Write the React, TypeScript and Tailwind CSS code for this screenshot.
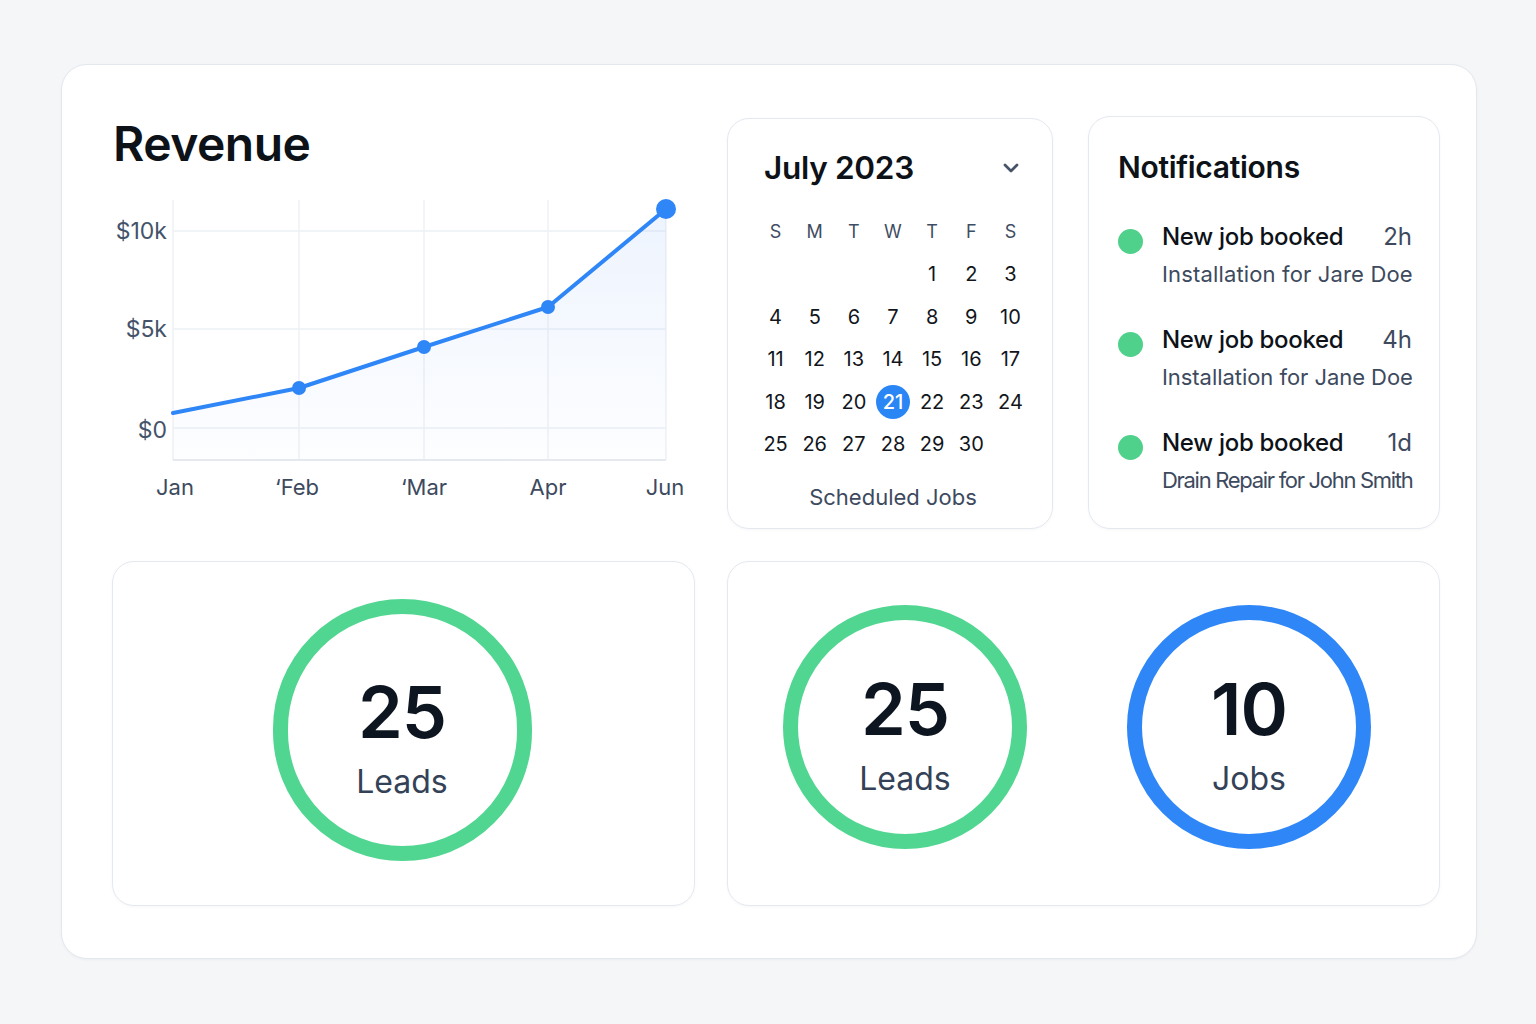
import { ChevronDown } from 'lucide-react';

const weekdays = ['S', 'M', 'T', 'W', 'T', 'F', 'S'];

// July as drawn in the design: 1 falls on the Thursday column
const dates: (number | null)[] = [
  null, null, null, null, 1, 2, 3,
  4, 5, 6, 7, 8, 9, 10,
  11, 12, 13, 14, 15, 16, 17,
  18, 19, 20, 21, 22, 23, 24,
  25, 26, 27, 28, 29, 30, null,
];

const notifications = [
  { title: 'New job booked', time: '2h', detail: 'Installation for Jare Doe', track: 'tracking-[0.15px]' },
  { title: 'New job booked', time: '4h', detail: 'Installation for Jane Doe', track: 'tracking-[-0.05px]' },
  { title: 'New job booked', time: '1d', detail: 'Drain Repair for John Smith', track: 'tracking-[-1.3px]' },
];

const points = [
  [61, 241],
  [187, 216],
  [312, 175],
  [436, 135],
  [554, 37],
];

const RevenueChart = () => {
  const line = points.map((p) => p.join(',')).join(' ');
  const area = `M61,288 L${points.map((p) => p.join(',')).join(' L')} L554,288 Z`;
  const xLabels = [
    { x: 63, t: 'Jan' },
    { x: 185, t: '\u2018Feb' },
    { x: 312, t: '\u2018Mar' },
    { x: 436, t: 'Apr' },
    { x: 553, t: 'Jun' },
  ];
  return (
    <svg width="583" height="340" viewBox="0 0 583 340" className="block">
      <defs>
        <linearGradient id="rev" x1="0" y1="0" x2="0" y2="1">
          <stop offset="0%" stopColor="#3b82f6" stopOpacity="0.09" />
          <stop offset="100%" stopColor="#3b82f6" stopOpacity="0.01" />
        </linearGradient>
      </defs>
      {[59, 157, 256].map((y) => (
        <line key={y} x1="61" x2="554" y1={y} y2={y} stroke="#edf0f4" strokeWidth="1.5" />
      ))}
      {[61, 187, 312, 436, 554].map((x) => (
        <line key={x} x1={x} x2={x} y1="28" y2="288" stroke="#eff1f5" strokeWidth="1.5" />
      ))}
      <line x1="61" x2="554" y1="288" y2="288" stroke="#e6e9ef" strokeWidth="2" />
      <path d={area} fill="url(#rev)" />
      <polyline points={line} fill="none" stroke="#2f86f6" strokeWidth="4" strokeLinejoin="round" strokeLinecap="round" />
      {points.slice(1, 4).map(([x, y]) => (
        <circle key={x} cx={x} cy={y} r="7" fill="#2f86f6" />
      ))}
      <circle cx="554" cy="37" r="10" fill="#2f86f6" />
      <g fontFamily="Inter, sans-serif" fontSize="23" fill="#44536a">
        <text x="55" y="67" textAnchor="end">$10k</text>
        <text x="55" y="165" textAnchor="end">$5k</text>
        <text x="55" y="266" textAnchor="end">$0</text>
      </g>
      <g fontFamily="Inter, sans-serif" fontSize="22" fill="#3d4a5e">
        {xLabels.map((l) => (
          <text key={l.t} x={l.x} y="323" textAnchor="middle">{l.t}</text>
        ))}
      </g>
    </svg>
  );
};

const Ring = ({ value, label, color, size }: { value: string; label: string; color: 'green' | 'blue'; size: 'lg' | 'md' }) => (
  <div
    className={
      'flex flex-col items-center justify-center rounded-full bg-white ' +
      (color === 'green' ? 'border-[#50d690] ' : 'border-[#2f87f7] ') +
      (size === 'lg' ? 'w-[259px] h-[262px] border-[15px]' : 'w-[244px] h-[244px] border-[15px]')
    }
  >
    <div className="text-[72px] leading-[80px] font-semibold text-[#0d1520] tracking-[-1px] mt-[14px]">{value}</div>
    <div className="text-[32px] leading-[40px] text-[#344257] mt-[10px]">{label}</div>
  </div>
);

export default function App() {
  return (
    <div className="min-h-[1024px] w-full bg-[#f5f6f8] pt-[64px] pl-[61px]" style={{ fontFamily: 'Inter, "Noto Sans", sans-serif' }}>
      <div className="w-[1416px] h-[895px] bg-white rounded-[26px] border border-[#e3e8ef] shadow-[0_1px_3px_rgba(15,23,42,0.04)] pl-[50px] pr-[36px] pt-[51px]">
        {/* top row */}
        <div className="flex h-[413px]">
          <div className="w-[583px]">
            <h1 className="text-[48px] leading-[56px] font-semibold text-[#0d1218] tracking-[-0.5px] pl-[1px]">Revenue</h1>
            <RevenueChart />
          </div>

          <div className="ml-[32px] w-[326px] mt-[2px] h-[411px] rounded-[22px] border border-[#e4e8ef] shadow-[0_1px_3px_rgba(15,23,42,0.04)] pl-[28px] pr-[22px] pt-[29px]">
            <div className="flex items-center justify-between h-[40px]">
              <span className="ml-[8px] text-[31.5px] font-semibold text-[#0d1218] tracking-[-0.3px]">July 2023</span>
              <div className="w-[39px] flex justify-center">
                <ChevronDown className="w-[24px] h-[24px] text-[#46546a]" strokeWidth={2.75} />
              </div>
            </div>
            <div className="grid grid-cols-7 mt-[30px] h-[24px]">
              {weekdays.map((d, i) => (
                <div key={i} className="flex items-center justify-center text-[18px] text-[#3f4d63]">{d}</div>
              ))}
            </div>
            <div className="grid grid-cols-7 mt-[11px]">
              {dates.map((d, i) => (
                <div key={i} className="h-[42.5px] flex items-center justify-center">
                  {d === 21 ? (
                    <span className="w-[34px] h-[34px] rounded-full bg-[#2b86f5] text-white text-[20px] font-medium flex items-center justify-center">21</span>
                  ) : (
                    <span className="text-[20px] text-[#12161c]">{d ?? ''}</span>
                  )}
                </div>
              ))}
            </div>
            <div className="mt-[16px] text-center text-[22px] leading-[30px] text-[#3d4a5e]">Scheduled Jobs</div>
          </div>

          <div className="ml-[35px] w-[352px] h-[413px] rounded-[22px] border border-[#e4e8ef] shadow-[0_1px_3px_rgba(15,23,42,0.04)] pl-[29px] pr-[27px] pt-[30px]">
            <h2 className="text-[30px] leading-[40px] font-semibold text-[#0d1218] tracking-[-0.3px]">Notifications</h2>
            <div className="mt-[34px] flex flex-col gap-[35px]">
              {notifications.map((n, i) => (
                <div key={i} className="flex h-[68px]">
                  <span className="mt-[8px] w-[25px] h-[25px] rounded-full bg-[#4fd18b] shrink-0" />
                  <div className="ml-[19px] flex-1 min-w-0">
                    <div className="flex justify-between h-[32px] items-center">
                      <span className="text-[24px] font-medium text-[#0d1218] tracking-[-0.3px]">{n.title}</span>
                      <span className="text-[24px] text-[#3d4a5e]">{n.time}</span>
                    </div>
                    <div className={'mt-[6px] h-[30px] leading-[30px] text-[22px] text-[#3d4a5e] whitespace-nowrap ' + n.track}>
                      {n.detail}
                    </div>
                  </div>
                </div>
              ))}
            </div>
          </div>
        </div>

        {/* bottom row */}
        <div className="flex mt-[32px] h-[345px]">
          <div className="w-[583px] rounded-[22px] border border-[#e4e8ef] shadow-[0_1px_3px_rgba(15,23,42,0.04)] flex items-center justify-center pr-[3px] pb-[8px]">
            <Ring value="25" label="Leads" color="green" size="lg" />
          </div>
          <div className="ml-[32px] w-[713px] rounded-[22px] border border-[#e4e8ef] shadow-[0_1px_3px_rgba(15,23,42,0.04)] flex items-center pl-[55px] pb-[14px]">
            <Ring value="25" label="Leads" color="green" size="md" />
            <div className="ml-[100px]">
              <Ring value="10" label="Jobs" color="blue" size="md" />
            </div>
          </div>
        </div>
      </div>
    </div>
  );
}
